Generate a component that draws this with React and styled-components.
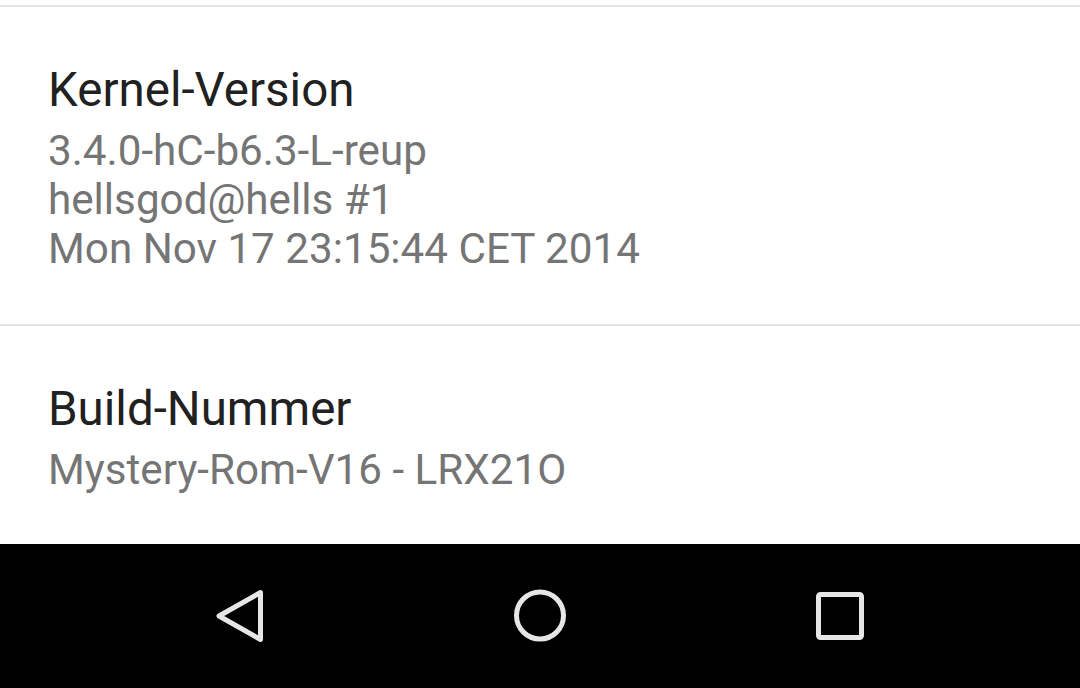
import React from 'react';
import styled, { createGlobalStyle } from 'styled-components';

const GlobalStyle = createGlobalStyle`
  html, body {
    margin: 0;
    padding: 0;
    background: #ffffff;
  }

  body {
    font-family: Roboto, 'Noto Sans', sans-serif;
    -webkit-font-smoothing: antialiased;
  }
`;

const Screen = styled.div`
  display: flex;
  flex-direction: column;
  width: 1080px;
  height: 688px;
  overflow: hidden;
`;

const List = styled.div`
  flex: 1;
  overflow: hidden;
  padding-top: 5px;
  background: #ffffff;
`;

const Item = styled.div`
  border-top: 2px solid #e2e2e2;
  padding: 55px 48px 51px 48px;
`;

const Title = styled.div`
  color: #212121;
  font-size: 47.5px;
  line-height: 56px;
  margin-bottom: 8px;
`;

const Summary = styled.div`
  color: #757575;
  font-size: 42.2px;
  line-height: 49px;
  white-space: pre-line;
`;

const NavBar = styled.nav`
  display: flex;
  flex: 0 0 144px;
  align-items: center;
  justify-content: center;
  background: #000000;
`;

const NavButton = styled.div`
  display: flex;
  align-items: center;
  justify-content: center;
  width: 300px;
  height: 100%;

  svg {
    fill: none;
    stroke: #e6e6e6;
    stroke-width: 5;
    stroke-linejoin: round;
  }
`;

const items = [
  {
    title: 'Kernel-Version',
    summary: '3.4.0-hC-b6.3-L-reup\nhellsgod@hells #1\nMon Nov 17 23:15:44 CET 2014',
  },
  {
    title: 'Build-Nummer',
    summary: 'Mystery-Rom-V16 - LRX21O',
  },
];

const BackIcon = () => (
  <svg width="60" height="60" viewBox="0 0 60 60">
    <path d="M50.5 6.5 L9 30 L50.5 53.5 Z" />
  </svg>
);

const HomeIcon = () => (
  <svg width="60" height="60" viewBox="0 0 60 60">
    <circle cx="30" cy="29.5" r="23.5" />
  </svg>
);

const RecentsIcon = () => (
  <svg width="60" height="60" viewBox="0 0 60 60">
    <rect x="8.5" y="8.5" width="43" height="43" rx="2" />
  </svg>
);

const App = () => (
  <>
    <GlobalStyle />
    <Screen>
      <List>
        {items.map((item) => (
          <Item key={item.title}>
            <Title>{item.title}</Title>
            <Summary>{item.summary}</Summary>
          </Item>
        ))}
      </List>
      <NavBar>
        <NavButton>
          <BackIcon />
        </NavButton>
        <NavButton>
          <HomeIcon />
        </NavButton>
        <NavButton>
          <RecentsIcon />
        </NavButton>
      </NavBar>
    </Screen>
  </>
);

export default App;
